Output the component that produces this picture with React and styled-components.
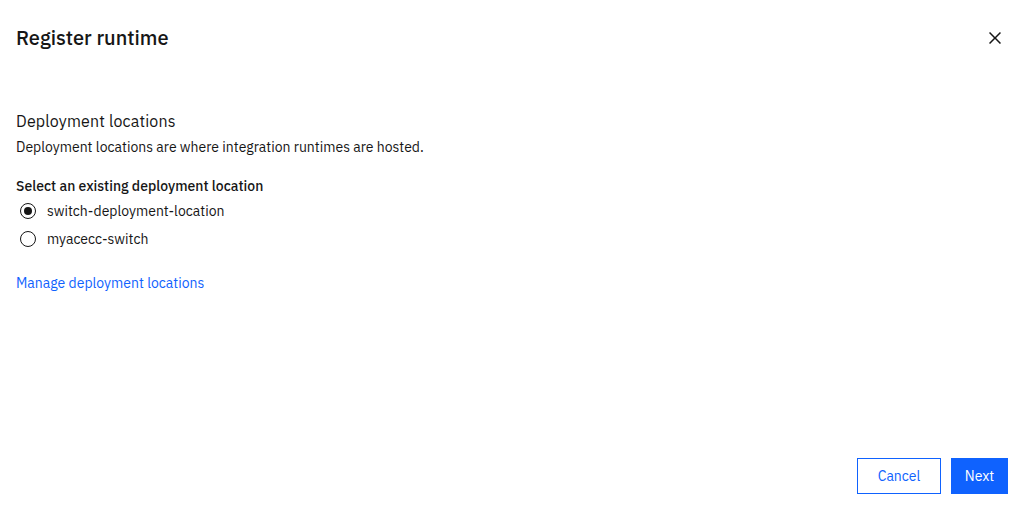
import React, { useState } from "react";
import styled, { createGlobalStyle } from "styled-components";

const GlobalStyle = createGlobalStyle`
  html, body {
    margin: 0;
    padding: 0;
    background: #fff;
  }
  body {
    font-family: "IBM Plex Sans", "Noto Sans", sans-serif;
    color: #161616;
  }
`;

const locations = ["switch-deployment-location", "myacecc-switch"];

const App = () => {
  const [selected, setSelected] = useState(locations[0]);

  return (
    <>
      <GlobalStyle />
      <Modal>
        <Header>
          <Title>Register runtime</Title>
          <CloseButton aria-label="Close">
            <svg width="24" height="24" viewBox="0 0 32 32" fill="currentColor">
              <path d="M24 9.4L22.6 8 16 14.6 9.4 8 8 9.4 14.6 16 8 22.6 9.4 24 16 17.4 22.6 24 24 22.6 17.4 16 24 9.4z" />
            </svg>
          </CloseButton>
        </Header>

        <Body>
          <SectionTitle>Deployment locations</SectionTitle>
          <Description>
            Deployment locations are where integration runtimes are hosted.
          </Description>

          <Fieldset>
            <Legend>Select an existing deployment location</Legend>
            {locations.map((loc) => (
              <RadioRow key={loc}>
                <RadioInput
                  type="radio"
                  name="location"
                  checked={selected === loc}
                  onChange={() => setSelected(loc)}
                />
                <RadioLabel>{loc}</RadioLabel>
              </RadioRow>
            ))}
          </Fieldset>

          <Link href="#">Manage deployment locations</Link>
        </Body>

        <Footer>
          <SecondaryButton>Cancel</SecondaryButton>
          <PrimaryButton>Next</PrimaryButton>
        </Footer>
      </Modal>
    </>
  );
};

export default App;

const Modal = styled.div`
  width: 1030px;
  height: 509px;
  display: flex;
  flex-direction: column;
  box-sizing: border-box;
  background: #fff;
`;

const Header = styled.div`
  display: flex;
  align-items: center;
  justify-content: space-between;
  padding: 26px 23px 0 16px;
  height: 24px;
`;

const Title = styled.h2`
  margin: 0;
  font-size: 20px;
  font-weight: 500;
  line-height: 24px;
  color: #161616;
`;

const CloseButton = styled.button`
  border: none;
  background: none;
  padding: 0;
  width: 24px;
  height: 24px;
  display: flex;
  align-items: center;
  justify-content: center;
  color: #161616;
  cursor: pointer;
`;

const Body = styled.div`
  flex: 1;
  display: flex;
  flex-direction: column;
  align-items: flex-start;
  padding: 60px 16px 0 16px;
`;

const SectionTitle = styled.h3`
  margin: 0;
  font-size: 16px;
  font-weight: 400;
  letter-spacing: 0.15px;
  line-height: 22px;
  color: #161616;
`;

const Description = styled.p`
  margin: 5px 0 0 0;
  font-size: 14px;
  line-height: 20px;
  color: #161616;
`;

const Fieldset = styled.fieldset`
  border: none;
  margin: 20px 0 0 0;
  padding: 0;
  display: flex;
  flex-direction: column;
`;

const Legend = styled.legend`
  padding: 0;
  font-size: 14px;
  font-weight: 500;
  line-height: 18px;
  color: #161616;
  margin-bottom: 2px;
`;

const RadioRow = styled.label`
  display: flex;
  align-items: center;
  height: 28px;
  cursor: pointer;
`;

const RadioInput = styled.input`
  appearance: none;
  margin: 0 11px 0 4px;
  width: 16px;
  height: 16px;
  border: 1px solid #161616;
  border-radius: 50%;
  box-sizing: border-box;
  display: grid;
  place-items: center;
  cursor: pointer;

  &:checked::before {
    content: "";
    width: 8px;
    height: 8px;
    border-radius: 50%;
    background: #161616;
  }
`;

const RadioLabel = styled.span`
  font-size: 14px;
  line-height: 18px;
  color: #161616;
`;

const Link = styled.a`
  margin-top: 21px;
  font-size: 14px;
  line-height: 18px;
  color: #0f62fe;
  text-decoration: none;
`;

const Footer = styled.div`
  display: flex;
  justify-content: flex-end;
  gap: 10px;
  padding: 0 22px 15px 0;
`;

const BaseButton = styled.button`
  height: 36px;
  font-family: inherit;
  font-size: 14px;
  box-sizing: border-box;
  cursor: pointer;
`;

const SecondaryButton = styled(BaseButton)`
  width: 84px;
  background: #fff;
  border: 1px solid #0f62fe;
  color: #0f62fe;
`;

const PrimaryButton = styled(BaseButton)`
  width: 57px;
  background: #0f62fe;
  border: 1px solid #0f62fe;
  color: #fff;
`;
